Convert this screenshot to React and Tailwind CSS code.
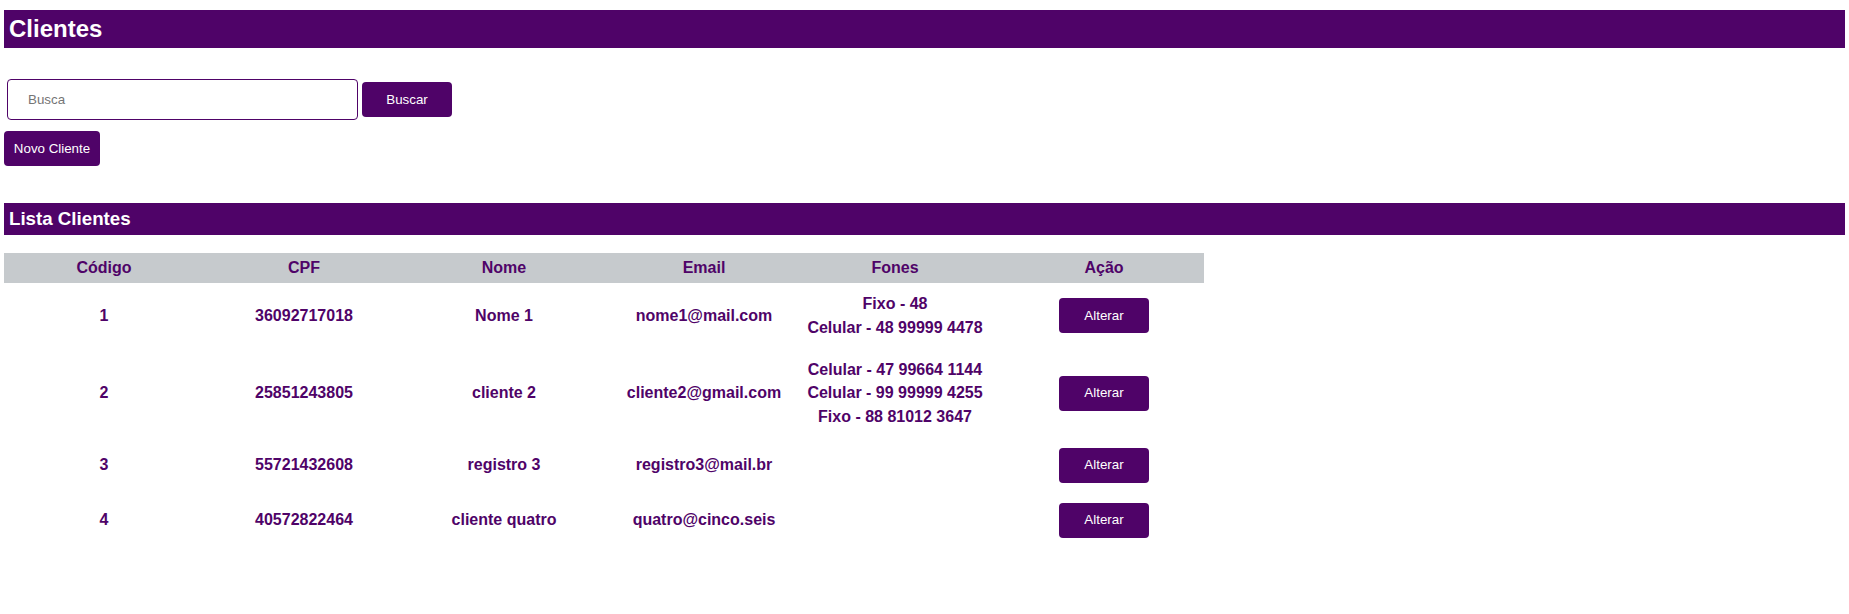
const clientes = [
  {
    codigo: 1,
    cpf: "36092717018",
    nome: "Nome 1",
    email: "nome1@mail.com",
    fones: ["Fixo - 48", "Celular - 48 99999 4478"],
  },
  {
    codigo: 2,
    cpf: "25851243805",
    nome: "cliente 2",
    email: "cliente2@gmail.com",
    fones: [
      "Celular - 47 99664 1144",
      "Celular - 99 99999 4255",
      "Fixo - 88 81012 3647",
    ],
  },
  {
    codigo: 3,
    cpf: "55721432608",
    nome: "registro 3",
    email: "registro3@mail.br",
    fones: [],
  },
  {
    codigo: 4,
    cpf: "40572822464",
    nome: "cliente quatro",
    email: "quatro@cinco.seis",
    fones: [],
  },
];

const cols = "grid grid-cols-[200px_200px_200px_200px_200px_200px]";

function App() {
  return (
    <div className="min-h-screen bg-white px-[4px] pt-[10px] font-['Liberation_Sans',Arial,sans-serif]">
      {/* titulo */}
      <h2 className="flex h-[38px] items-center bg-[#4f0368] pl-[5px] text-[24px] font-bold text-white">
        Clientes
      </h2>

      {/* busca */}
      <div className="mt-[31px] ml-[3px] flex items-center gap-[4px]">
        <input
          type="text"
          placeholder="Busca"
          className="h-[41px] w-[351px] rounded-[4px] border border-[#4f0368] pl-[20px] text-[13.33px] text-[#333] outline-none placeholder:text-[#757575]"
        />
        <button className="h-[35px] w-[90px] rounded-[4px] bg-[#4f0368] text-[13.33px] text-white">
          Buscar
        </button>
      </div>

      <button className="mt-[11px] h-[35px] w-[96px] rounded-[4px] bg-[#4f0368] text-[13.33px] text-white">
        Novo Cliente
      </button>

      {/* lista */}
      <h3 className="mt-[37px] flex h-[32px] items-center bg-[#4f0368] pl-[5px] text-[18.72px] font-bold text-white">
        Lista Clientes
      </h3>

      <div className="mt-[18px] w-[1200px] text-[16px] font-bold text-[#4f0368]">
        <div className={`${cols} h-[30px] items-center bg-[#c6cacd] text-center`}>
          <div>Código</div>
          <div>CPF</div>
          <div>Nome</div>
          <div>Email</div>
          <div className="pr-[18px]">Fones</div>
          <div>Ação</div>
        </div>

        {clientes.map((c) => (
          <div key={c.codigo} className={`${cols} items-center py-[10px] text-center`}>
            <div>{c.codigo}</div>
            <div>{c.cpf}</div>
            <div>{c.nome}</div>
            <div>{c.email}</div>
            <div className="flex flex-col gap-[1.5px] pr-[18px] leading-[22px]">
              {c.fones.map((f) => (
                <div key={f}>{f}</div>
              ))}
            </div>
            <div className="flex justify-center">
              <button className="h-[35px] w-[90px] rounded-[4px] bg-[#4f0368] text-[13.33px] font-normal text-white">
                Alterar
              </button>
            </div>
          </div>
        ))}
      </div>
    </div>
  );
}

export default App;
